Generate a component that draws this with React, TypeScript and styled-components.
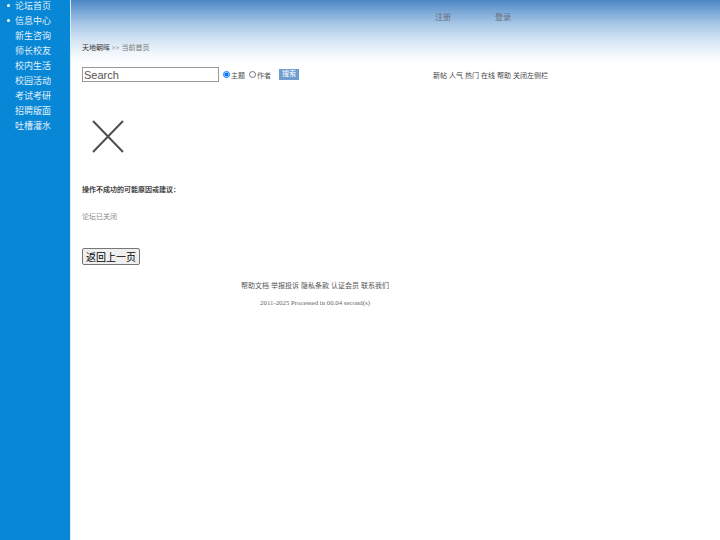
import React from "react";
import styled, { createGlobalStyle } from "styled-components";

const GlobalStyle = createGlobalStyle`
  html, body { margin: 0; padding: 0; background: #fff; }
  body { font-family: "Liberation Serif", "Noto Sans CJK SC", serif; }
`;

const Page = styled.div`
  display: flex;
  min-height: 100vh;
`;

const Sidebar = styled.nav`
  width: 70px;
  flex-shrink: 0;
  background: #0887d6;
`;

const NavList = styled.ul`
  margin: 0;
  padding: 1px 0 0 15px;
  list-style: none;
`;

const NavItem = styled.li<{ $bullet?: boolean }>`
  color: rgba(255, 255, 255, 0.9);
  font-size: 9px;
  line-height: 10px;
  margin-bottom: 5px;
  &::before {
    content: "";
    display: ${(p) => (p.$bullet ? "inline-block" : "none")};
    width: 3px;
    height: 3px;
    border-radius: 50%;
    background: #fff;
    margin: 0 5.5px 0 -8.5px;
    vertical-align: 2px;
  }
`;

const Main = styled.main`
  flex: 1;
  border-left: 1px solid #d2f1fb;
  background: linear-gradient(
    to bottom,
    #4c87c5 0px,
    #7ba8d7 12px,
    #a8c7e6 24px,
    #d4e4f3 40px,
    #f2f7fc 54px,
    #ffffff 64px
  );
  background-repeat: no-repeat;
  background-color: #fff;
`;

const Container = styled.div`
  width: 466px;
  margin-left: 11px;
`;

const TopBar = styled.div`
  display: flex;
  padding: 13px 0 0 331px;
  line-height: 10px;
`;

const TopLink = styled.a`
  width: 60px;
  text-align: center;
  font-size: 8px;
  color: #6a6f78;
  text-decoration: none;
`;

const Crumbs = styled.div`
  margin-top: 20px;
  line-height: 10px;
  font-size: 7px;
  color: #777;
`;

const CrumbHome = styled.span`
  color: #333;
`;

const SearchRow = styled.div`
  margin-top: 14px;
  height: 15px;
  display: flex;
  align-items: center;
`;

const SearchInput = styled.input`
  box-sizing: border-box;
  width: 137px;
  height: 15px;
  border: 1px solid #999;
  padding: 0 1px;
  font-family: "Liberation Sans", Arial, sans-serif;
  font-size: 11px;
  color: #333;
  outline: none;
  &::placeholder { color: #555; }
`;

const RadioLabel = styled.label`
  display: flex;
  align-items: center;
  font-size: 7px;
  color: #555;
  margin-left: 4px;
`;

const Radio = styled.input`
  width: 7px;
  height: 7px;
  margin: 0 1px 0 0;
`;

const SearchButton = styled.button`
  margin-left: 8px;
  width: 20px;
  height: 11px;
  padding: 0;
  border: none;
  background: #6f9dd0;
  color: #fff;
  font-family: inherit;
  font-size: 7px;
  line-height: 11px;
`;

const QuickLinks = styled.div`
  margin-left: auto;
  font-size: 7px;
  color: #444;
  padding-top: 1px;
  display: flex;
  gap: 2px;
`;

const Icon = styled.svg`
  display: block;
  margin: 38px 0 0 10px;
`;

const Reason = styled.div`
  margin-top: 32px;
  line-height: 10px;
  font-size: 7px;
  font-weight: bold;
  color: #444;
`;

const Message = styled.div`
  margin-top: 17px;
  line-height: 10px;
  font-size: 7px;
  color: #888;
`;

const BackButton = styled.button`
  display: block;
  margin-top: 26px;
  height: 17px;
  padding: 0 3px;
  font-family: "Noto Sans CJK SC", sans-serif;
  font-size: 10px;
  line-height: 15px;
  color: #000;
  background: #efefef;
  border: 1px solid #767676;
  border-radius: 2px;
`;

const Footer = styled.footer`
  margin-top: 16px;
  text-align: center;
`;

const FooterLinks = styled.div`
  line-height: 10px;
  font-size: 7px;
  color: #555;
  display: flex;
  justify-content: center;
  gap: 2px;
`;

const Copyright = styled.div`
  margin-top: 7px;
  line-height: 10px;
  font-size: 6.8px;
  color: #666;
`;

const navItems: { label: string; bullet?: boolean }[] = [
  { label: "论坛首页", bullet: true },
  { label: "信息中心", bullet: true },
  { label: "新生咨询" },
  { label: "师长校友" },
  { label: "校内生活" },
  { label: "校园活动" },
  { label: "考试考研" },
  { label: "招聘版面" },
  { label: "吐槽灌水" },
];

const quick = ["新帖", "人气", "热门", "在线", "帮助", "关闭左侧栏"];
const footerLinks = ["帮助文档", "举报投诉", "隐私条款", "认证会员", "联系我们"];

export default function App() {
  return (
    <>
      <GlobalStyle />
      <Page>
        <Sidebar>
          <NavList>
            {navItems.map((n) => (
              <NavItem key={n.label} $bullet={n.bullet}>
                {n.label}
              </NavItem>
            ))}
          </NavList>
        </Sidebar>
        <Main>
          <Container>
            <TopBar>
              <TopLink>注册</TopLink>
              <TopLink>登录</TopLink>
            </TopBar>
            <Crumbs>
              <CrumbHome>天地朝晖</CrumbHome> &gt;&gt; 当前首页
            </Crumbs>
            <SearchRow>
              <SearchInput placeholder="Search" />
              <RadioLabel>
                <Radio type="radio" name="t" defaultChecked />
                主题
              </RadioLabel>
              <RadioLabel>
                <Radio type="radio" name="t" />
                作者
              </RadioLabel>
              <SearchButton>搜索</SearchButton>
              <QuickLinks>
                {quick.map((q) => (
                  <span key={q}>{q}</span>
                ))}
              </QuickLinks>
            </SearchRow>
            <Icon width="32" height="33" viewBox="0 0 32 33">
              <path d="M1 1 L31 32 M31 1 L1 32" stroke="#505050" strokeWidth="2" fill="none" />
            </Icon>
            <Reason>操作不成功的可能原因或建议：</Reason>
            <Message>论坛已关闭</Message>
            <BackButton>返回上一页</BackButton>
            <Footer>
              <FooterLinks>
                {footerLinks.map((f) => (
                  <span key={f}>{f}</span>
                ))}
              </FooterLinks>
              <Copyright>2011-2025 Processed in 00.04 second(s)</Copyright>
            </Footer>
          </Container>
        </Main>
      </Page>
    </>
  );
}
